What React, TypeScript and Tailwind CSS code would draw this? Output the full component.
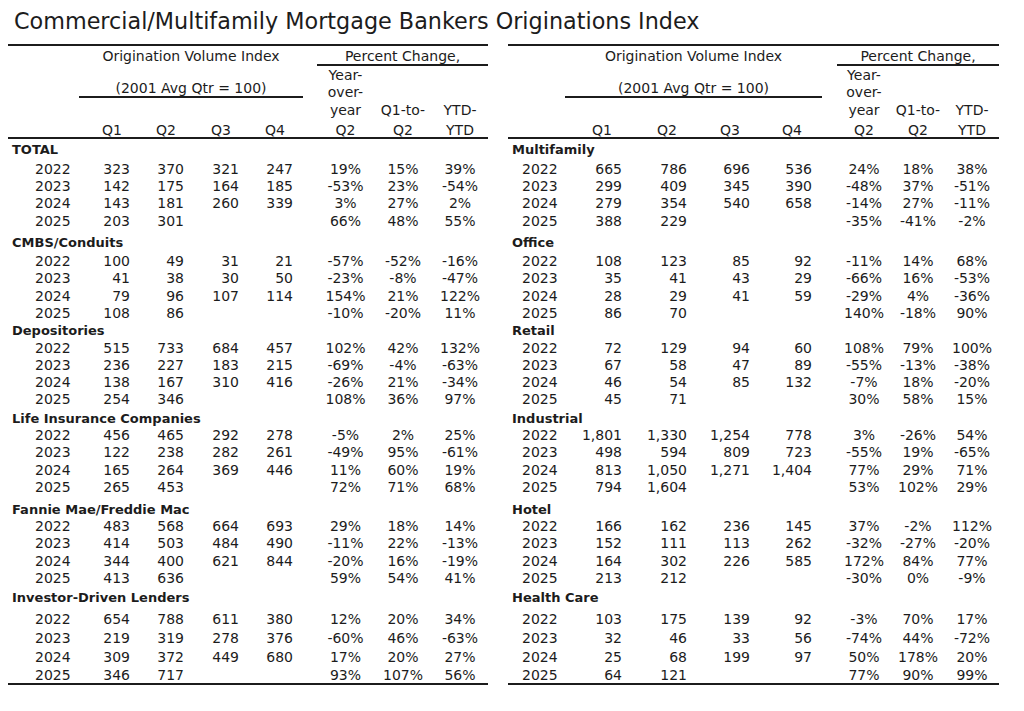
import React from 'react';

type Block = { title: string; rows: string[][] };

const leftBlocks: Block[] = [
  {
    title: 'TOTAL',
    rows: [
      ['2022', '323', '370', '321', '247', '19%', '15%', '39%'],
      ['2023', '142', '175', '164', '185', '-53%', '23%', '-54%'],
      ['2024', '143', '181', '260', '339', '3%', '27%', '2%'],
      ['2025', '203', '301', '', '', '66%', '48%', '55%'],
    ],
  },
  {
    title: 'CMBS/Conduits',
    rows: [
      ['2022', '100', '49', '31', '21', '-57%', '-52%', '-16%'],
      ['2023', '41', '38', '30', '50', '-23%', '-8%', '-47%'],
      ['2024', '79', '96', '107', '114', '154%', '21%', '122%'],
      ['2025', '108', '86', '', '', '-10%', '-20%', '11%'],
    ],
  },
  {
    title: 'Depositories',
    rows: [
      ['2022', '515', '733', '684', '457', '102%', '42%', '132%'],
      ['2023', '236', '227', '183', '215', '-69%', '-4%', '-63%'],
      ['2024', '138', '167', '310', '416', '-26%', '21%', '-34%'],
      ['2025', '254', '346', '', '', '108%', '36%', '97%'],
    ],
  },
  {
    title: 'Life Insurance Companies',
    rows: [
      ['2022', '456', '465', '292', '278', '-5%', '2%', '25%'],
      ['2023', '122', '238', '282', '261', '-49%', '95%', '-61%'],
      ['2024', '165', '264', '369', '446', '11%', '60%', '19%'],
      ['2025', '265', '453', '', '', '72%', '71%', '68%'],
    ],
  },
  {
    title: 'Fannie Mae/Freddie Mac',
    rows: [
      ['2022', '483', '568', '664', '693', '29%', '18%', '14%'],
      ['2023', '414', '503', '484', '490', '-11%', '22%', '-13%'],
      ['2024', '344', '400', '621', '844', '-20%', '16%', '-19%'],
      ['2025', '413', '636', '', '', '59%', '54%', '41%'],
    ],
  },
  {
    title: 'Investor-Driven Lenders',
    rows: [
      ['2022', '654', '788', '611', '380', '12%', '20%', '34%'],
      ['2023', '219', '319', '278', '376', '-60%', '46%', '-63%'],
      ['2024', '309', '372', '449', '680', '17%', '20%', '27%'],
      ['2025', '346', '717', '', '', '93%', '107%', '56%'],
    ],
  },
];

const rightBlocks: Block[] = [
  {
    title: 'Multifamily',
    rows: [
      ['2022', '665', '786', '696', '536', '24%', '18%', '38%'],
      ['2023', '299', '409', '345', '390', '-48%', '37%', '-51%'],
      ['2024', '279', '354', '540', '658', '-14%', '27%', '-11%'],
      ['2025', '388', '229', '', '', '-35%', '-41%', '-2%'],
    ],
  },
  {
    title: 'Office',
    rows: [
      ['2022', '108', '123', '85', '92', '-11%', '14%', '68%'],
      ['2023', '35', '41', '43', '29', '-66%', '16%', '-53%'],
      ['2024', '28', '29', '41', '59', '-29%', '4%', '-36%'],
      ['2025', '86', '70', '', '', '140%', '-18%', '90%'],
    ],
  },
  {
    title: 'Retail',
    rows: [
      ['2022', '72', '129', '94', '60', '108%', '79%', '100%'],
      ['2023', '67', '58', '47', '89', '-55%', '-13%', '-38%'],
      ['2024', '46', '54', '85', '132', '-7%', '18%', '-20%'],
      ['2025', '45', '71', '', '', '30%', '58%', '15%'],
    ],
  },
  {
    title: 'Industrial',
    rows: [
      ['2022', '1,801', '1,330', '1,254', '778', '3%', '-26%', '54%'],
      ['2023', '498', '594', '809', '723', '-55%', '19%', '-65%'],
      ['2024', '813', '1,050', '1,271', '1,404', '77%', '29%', '71%'],
      ['2025', '794', '1,604', '', '', '53%', '102%', '29%'],
    ],
  },
  {
    title: 'Hotel',
    rows: [
      ['2022', '166', '162', '236', '145', '37%', '-2%', '112%'],
      ['2023', '152', '111', '113', '262', '-32%', '-27%', '-20%'],
      ['2024', '164', '302', '226', '585', '172%', '84%', '77%'],
      ['2025', '213', '212', '', '', '-30%', '0%', '-9%'],
    ],
  },
  {
    title: 'Health Care',
    rows: [
      ['2022', '103', '175', '139', '92', '-3%', '70%', '17%'],
      ['2023', '32', '46', '33', '56', '-74%', '44%', '-72%'],
      ['2024', '25', '68', '199', '97', '50%', '178%', '20%'],
      ['2025', '64', '121', '', '', '77%', '90%', '99%'],
    ],
  },
];

const BLOCK_MT = ['mt-[1.5px]', 'mt-[3.6px]', '-mt-[1px]', 'mt-[0.7px]', 'mt-[4px]', 'mt-[0.7px]'];
const HEAD_H = ['h-[20.5px]', 'h-[19.5px]', 'h-[18.4px]', 'h-[17.5px]', 'h-[17.8px]', 'h-[19.5px]'];

type TableProps = {
  blocks: Block[];
  cols: string;
  width: string;
  yearPad: string;
  lineInset: string;
  qPad: string;
};

function Table({ blocks, cols, width, yearPad, lineInset, qPad }: TableProps) {
  return (
    <div className={`flex flex-col ${width}`}>
      <div className={`grid ${cols} grid-rows-[19.5px_57.2px_14px] border-t-2 border-b-2 border-[#1c1c1c]`}>
        <div className="col-start-2 col-span-5 row-start-1 pt-[2.5px] leading-[15px]">
          <div className={`${lineInset} text-center`}>Origination Volume Index</div>
        </div>
        <div className="col-start-7 col-span-3 row-start-1 pt-[2.5px] leading-[15px] text-center border-b-2 border-[#1c1c1c]">
          Percent Change,
        </div>
        <div className="col-start-2 col-span-5 row-start-2 self-start">
          <div className={`${lineInset} pt-[15.5px] leading-[15px] text-center border-b-2 border-[#1c1c1c]`}>
            (2001 Avg Qtr = 100)
          </div>
        </div>
        <div className="col-start-7 row-start-2 flex flex-col justify-end pb-[3.7px] leading-[17.3px] text-center">
          <div>Year-</div>
          <div>over-</div>
          <div>year</div>
        </div>
        <div className="col-start-8 row-start-2 flex flex-col justify-end pb-[3.7px] leading-[17.3px] text-center">
          <div>Q1-to-</div>
        </div>
        <div className="col-start-9 row-start-2 flex flex-col justify-end pb-[3.7px] leading-[17.3px] text-center">
          <div>YTD-</div>
        </div>
        <div className={`col-start-2 row-start-3 leading-[14px] text-right ${qPad}`}>Q1</div>
        <div className={`col-start-3 row-start-3 leading-[14px] text-right ${qPad}`}>Q2</div>
        <div className={`col-start-4 row-start-3 leading-[14px] text-right ${qPad}`}>Q3</div>
        <div className={`col-start-5 row-start-3 leading-[14px] text-right ${qPad}`}>Q4</div>
        <div className="col-start-7 row-start-3 leading-[14px] text-center">Q2</div>
        <div className="col-start-8 row-start-3 leading-[14px] text-center">Q2</div>
        <div className="col-start-9 row-start-3 leading-[14px] text-center">YTD</div>
      </div>
      <div className="flex flex-col border-b-2 border-[#1c1c1c]">
        {blocks.map((b, bi) => {
          const lastBlock = bi === blocks.length - 1;
          return (
            <div key={b.title} className={BLOCK_MT[bi]}>
              <div className={`${HEAD_H[bi]} leading-[19.5px] pl-[4px] font-bold text-[13px] whitespace-nowrap`}>
                {b.title}
              </div>
              {b.rows.map((r, ri) => {
                let h = 'h-[17.3px] leading-[17.3px]';
                if (lastBlock) {
                  h = ri === 3 ? 'h-[16px] leading-[16px]' : 'h-[19px] leading-[19px]';
                }
                const mt = lastBlock && ri === 0 ? 'mt-[2.35px]' : '';
                return (
                  <div key={ri} className={`grid ${cols} ${h} ${mt} whitespace-nowrap`}>
                    <div className={yearPad}>{r[0]}</div>
                    <div className="text-right">{r[1]}</div>
                    <div className="text-right">{r[2]}</div>
                    <div className="text-right">{r[3]}</div>
                    <div className="text-right">{r[4]}</div>
                    <div />
                    <div className="text-center">{r[5]}</div>
                    <div className="text-center">{r[6]}</div>
                    <div className="text-center">{r[7]}</div>
                  </div>
                );
              })}
            </div>
          );
        })}
      </div>
    </div>
  );
}

export default function App() {
  return (
    <div className="w-[1024px] h-[711px] bg-white text-[#1c1c1c] font-['DejaVu_Sans',sans-serif] text-[14px] pt-[6px] pl-[8px] flex flex-col">
      <div className="h-[30px] leading-[30px] text-[22.3px] pl-[6px] whitespace-nowrap">
        Commercial/Multifamily Mortgage Bankers Originations Index
      </div>
      <div className="mt-[8px] flex gap-[20px]">
        <Table
          blocks={leftBlocks}
          cols="grid-cols-[68px_54px_54px_55px_54px_24px_57px_58px_56px]"
          width="w-[480px]"
          yearPad="pl-[27px]"
          lineInset="ml-[3px] mr-[14px]"
          qPad="pr-[8px]"
        />
        <Table
          blocks={rightBlocks}
          cols="grid-cols-[51px_63px_65px_63px_62px_25px_54px_54px_54px]"
          width="w-[491px]"
          yearPad="pl-[14px]"
          lineInset="ml-[6px] mr-[15px]"
          qPad="pr-[10px]"
        />
      </div>
    </div>
  );
}
